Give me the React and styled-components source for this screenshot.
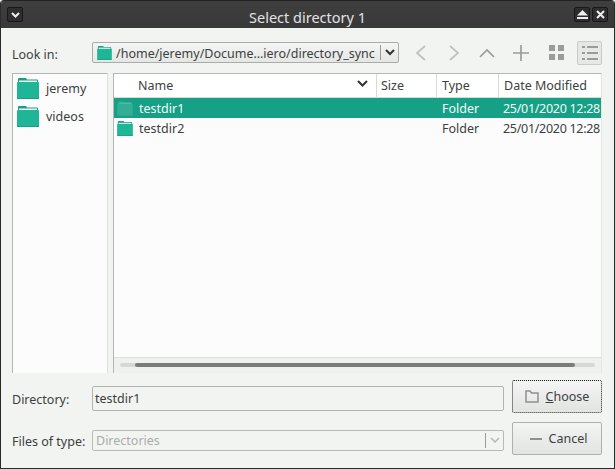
import React from "react";
import styled, { createGlobalStyle } from "styled-components";

const Global = createGlobalStyle`
  html, body { margin: 0; padding: 0; width: 615px; height: 469px; overflow: hidden; background: #f2f4f2; }
  * { box-sizing: border-box; }
`;
const Window = styled.div`
  width: 615px; height: 469px; display: flex; flex-direction: column;
  font: 12.5px "Noto Sans", "Open Sans", sans-serif; color: #3c3f3e;
  background: #f2f4f2; border: 1px solid #2a2a2a; border-top: 0; border-radius: 4px 4px 0 0; overflow: hidden;
`;
const TitleBar = styled.div`
  height: 28px; flex: none; display: flex; align-items: center; justify-content: space-between;
  padding: 0 6px; background: linear-gradient(#3f3f3f, #383838); border-top: 1px solid #222;
  color: #e2e2e2; position: relative;
`;
const Title = styled.div`
  position: absolute; left: 0; right: 0; top: 6px; text-align: center; font-size: 14.5px; line-height: 20px;
`;
const WinButtons = styled.div` display: flex; gap: 2px; `;
const WinButton = styled.div`
  width: 16px; height: 15px; display: flex; align-items: center; justify-content: center;
  background: #2e2e2e; border: 1px solid #181818; border-radius: 2px; position: relative; z-index: 1;
`;
const Content = styled.div`
  flex: 1; display: flex; flex-direction: column; padding: 14px 12px 0 11px;
`;
const Toolbar = styled.div`
  display: flex; align-items: center; height: 21px;
`;
const FieldLabel = styled.div` width: 80px; flex: none; padding-top: ${p => p.$drop}px; `;
const Combo = styled.div`
  width: 307px; flex: none; height: 21px; display: flex; align-items: center; padding: 0 0 0 4px;
  border: 1px solid #a9aca8; border-radius: 2px; background: linear-gradient(#f4f5f4, #e5e7e5);
`;
const ComboText = styled.div` flex: 1; margin-left: 4px; padding-top: 2px; white-space: nowrap; overflow: hidden; `;
const ComboArrow = styled.div`
  width: 18px; height: 15px; border-left: 1px solid #9a9c9a; display: flex; align-items: center; justify-content: center; flex: none;
`;
const Tools = styled.div`
  display: flex; align-items: center; margin-left: 5px;
`;
const Tool = styled.div`
  width: 33px; height: 24px; flex: none; margin-left: ${p => p.$shift || 0}px; display: flex; align-items: center; justify-content: center;
`;
const ToolActive = styled.div`
  width: 25px; height: 24px; flex: none; margin-left: 4px; display: flex; align-items: center; justify-content: center;
  background: #e6e8e6; border: 1px solid #c8cac8; border-radius: 2px;
`;
const Panes = styled.div`
  display: flex; height: 300px; margin-top: 10px; gap: 5px;
`;
const Sidebar = styled.div`
  width: 96px; flex: none; background: #fbfcfb; border: 1px solid #b4b7b3; border-bottom: 0; padding: 0 0 0 4px;
  border-right-color: #dfe1df;
`;
const Place = styled.div`
  height: 28px; display: flex; align-items: center; gap: 7px;
`;
const Main = styled.div`
  flex: 1; display: flex; flex-direction: column; background: #fbfcfb; border: 1px solid #b4b7b3;
  border-bottom: 0; border-right-color: #e4e6e4; min-width: 0;
`;
const Header = styled.div`
  display: grid; grid-template-columns: 263px 60px 62px 1fr; height: 24px; background: #fff;
  border-bottom: 1px solid #d8dad8; flex: none;
`;
const HeadCell = styled.div`
  position: relative; padding: 3px 0 0 ${p => p.$pad}px; border-right: ${p => p.$last ? 0 : "1px solid #d8dad8"};
`;
const SortMark = styled.svg` position: absolute; right: 8px; top: 6px; `;
const Rows = styled.div` flex: 1; `;
const Row = styled.div`
  display: grid; grid-template-columns: 263px 60px 62px 1fr; height: 20px; align-items: center;
  background: ${p => p.$sel ? "#16a085" : "transparent"}; color: ${p => p.$sel ? "#f4fbf9" : "#3c3f3e"};
  white-space: nowrap; overflow: hidden;
`;
const NameCell = styled.div` display: flex; align-items: center; gap: 6px; padding-left: 3px; `;
const TypeCell = styled.div` padding-left: 5px; `;
const DateCell = styled.div` padding-left: 4px; letter-spacing: -0.3px; `;
const ScrollArea = styled.div`
  height: 16px; flex: none; display: flex; align-items: center; padding: 0 6px 2px; background: #eff1ef;
  border-top: 1px solid #dcdedc;
`;
const Track = styled.div` flex: 1; height: 4px; background: #d6d8d6; border-radius: 2px; padding: 0 20px 0 15px; `;
const Thumb = styled.div` height: 4px; background: #7a7c7b; border-radius: 2px; `;
const Form = styled.div`
  display: grid; grid-template-columns: 80px 412px 98px; margin-top: 7px;
  grid-template-rows: 33px 33px; row-gap: 9px; align-items: center;
`;
const Input = styled.div`
  height: 25px; width: 412px; display: flex; align-items: center; border: 1px solid #b0b3af; border-radius: 2px;
  background: #f2f4f2; padding: 0 0 0 2px; margin-top: 4px;
`;
const TypeCombo = styled.div`
  height: 21px; width: 412px; display: flex; align-items: center; padding-left: 3px; color: #a9acaa;
  border: 1px solid #b8bab7; border-radius: 2px; background: #f2f4f2; margin-top: 4px;
`;
const TypeText = styled.div` flex: 1; `;
const DialogButton = styled.div`
  height: 33px; width: 90px; margin-left: 8px; display: flex; align-items: center; justify-content: center; gap: 7px;
  padding-left: ${p => p.$focus ? 0 : 3}px;
  background: linear-gradient(#f3f4f3, #e2e4e2); border-radius: 2px;
  border: 1px ${p => p.$focus ? "dotted #222" : "solid #aeb1ae"};
`;
const Underlined = styled.span` text-decoration: underline; `;

const Folder = ({ w = 22, h = 21, dim }) => (
  <svg width={w} height={h} viewBox="0 0 22 21">
    <path d="M1 2V1Q1 0 2 0H9L10 1.500H20Q21 1.500 21 2.500V5H1Z" fill={dim ? "#2aa890" : "#16a085"} />
    <rect x="2" y="2.500" width="18" height="2" fill={dim ? "#5cc0ac" : "#f2fbf9"} />
    <rect x="0" y="4" width="22" height="17" rx="1" fill={dim ? "#32ad96" : "#1fb597"} />
    <rect x="0" y="20" width="22" height="1" fill={dim ? "#2aa890" : "#169f85"} />
  </svg>
);
const Chev = ({ d, c = "#bfc1bf", w = 1.7 }) => (
  <svg width="18" height="18" viewBox="0 0 18 18" fill="none" stroke={c} strokeWidth={w}><path d={d} /></svg>
);

export default function App() {
  return (
    <Window>
      <Global />
      <TitleBar>
        <WinButton>
          <svg width="9" height="6" viewBox="0 0 9 6" fill="none" stroke="#eee" strokeWidth="2"><path d="M1 1l3.500 3.500L8 1" /></svg>
        </WinButton>
        <Title>Select directory 1</Title>
        <WinButtons>
          <WinButton>
            <svg width="11" height="9" viewBox="0 0 11 9" fill="#eee"><path d="M5.500 0L11 5.500H0Z" /><rect y="7" width="11" height="2" /></svg>
          </WinButton>
          <WinButton>
            <svg width="9" height="9" viewBox="0 0 9 9" stroke="#eee" strokeWidth="2"><path d="M1 1l7 7M8 1l-7 7" /></svg>
          </WinButton>
        </WinButtons>
      </TitleBar>
      <Content>
        <Toolbar>
          <FieldLabel $drop={3}>Look in:</FieldLabel>
          <Combo>
            <Folder w={15} h={14} />
            <ComboText>/home/jeremy/Docume…iero/directory_sync</ComboText>
            <ComboArrow>
              <svg width="10" height="7" viewBox="0 0 10 7" fill="none" stroke="#333" strokeWidth="2"><path d="M1 1l4 4 4-4" /></svg>
            </ComboArrow>
          </Combo>
          <Tools>
            <Tool><Chev d="M13 2L5 9l8 7" /></Tool>
            <Tool><Chev d="M5 2l8 7-8 7" /></Tool>
            <Tool><Chev d="M2 13l7-7 7 7" c="#9a9c9a" /></Tool>
            <Tool $shift={1}><Chev d="M9 1v16M1 9h16" c="#9a9c9a" /></Tool>
            <Tool $shift={3}>
              <svg width="15" height="15" viewBox="0 0 15 15" fill="#9a9c9a"><rect width="6" height="6" /><rect x="9" width="6" height="6" /><rect y="9" width="6" height="6" /><rect x="9" y="9" width="6" height="6" /></svg>
            </Tool>
            <ToolActive>
              <svg width="16" height="14" viewBox="0 0 16 14" fill="#9a9c9a"><rect width="3" height="2" /><rect x="5" width="11" height="2" /><rect y="6" width="3" height="2" /><rect x="5" y="6" width="11" height="2" /><rect y="12" width="3" height="2" /><rect x="5" y="12" width="11" height="2" /></svg>
            </ToolActive>
          </Tools>
        </Toolbar>
        <Panes>
          <Sidebar>
            <Place><Folder />jeremy</Place>
            <Place><Folder />videos</Place>
          </Sidebar>
          <Main>
            <Header>
              <HeadCell $pad={24}>Name
                <SortMark width="11" height="7" viewBox="0 0 11 7" fill="none" stroke="#333" strokeWidth="2"><path d="M1 1l4.500 4.500L10 1" /></SortMark>
              </HeadCell>
              <HeadCell $pad={4}>Size</HeadCell>
              <HeadCell $pad={5}>Type</HeadCell>
              <HeadCell $pad={5} $last>Date Modified</HeadCell>
            </Header>
            <Rows>
              <Row $sel>
                <NameCell><Folder w={16} h={15} dim />testdir1</NameCell><div />
                <TypeCell>Folder</TypeCell><DateCell>25/01/2020 12:28</DateCell>
              </Row>
              <Row>
                <NameCell><Folder w={16} h={15} />testdir2</NameCell><div />
                <TypeCell>Folder</TypeCell><DateCell>25/01/2020 12:28</DateCell>
              </Row>
            </Rows>
            <ScrollArea><Track><Thumb /></Track></ScrollArea>
          </Main>
        </Panes>
        <Form>
          <FieldLabel $drop={5}>Directory:</FieldLabel>
          <Input>testdir1</Input>
          <DialogButton $focus>
            <svg width="14" height="13" viewBox="0 0 14 13" fill="none" stroke="#8f918f" strokeWidth="1.500"><path d="M1 12V1h4l1.500 2H13v9Z" /></svg>
            <span><Underlined>C</Underlined>hoose</span>
          </DialogButton>
          <FieldLabel $drop={5}>Files of type:</FieldLabel>
          <TypeCombo>
            <TypeText>Directories</TypeText>
            <ComboArrow>
              <svg width="10" height="7" viewBox="0 0 10 7" fill="none" stroke="#b5b7b5" strokeWidth="1.500"><path d="M1 1l4 4 4-4" /></svg>
            </ComboArrow>
          </TypeCombo>
          <DialogButton>
            <svg width="12" height="2" viewBox="0 0 12 2" fill="#8f918f"><rect width="12" height="2" /></svg>
            Cancel
          </DialogButton>
        </Form>
      </Content>
    </Window>
  );
}
